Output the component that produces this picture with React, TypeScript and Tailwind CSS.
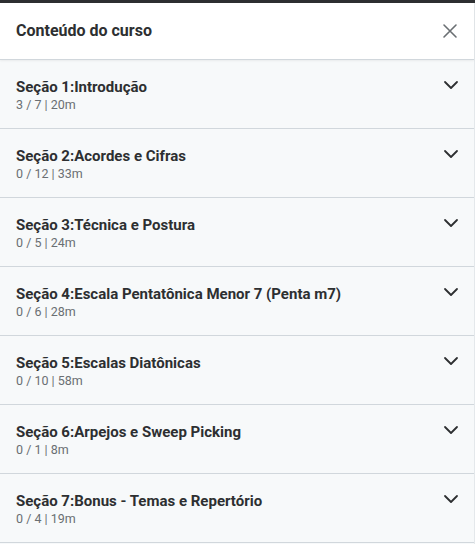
const sections = [
  { title: "Seção 1:Introdução", meta: "3 / 7 | 20m" },
  { title: "Seção 2:Acordes e Cifras", meta: "0 / 12 | 33m" },
  { title: "Seção 3:Técnica e Postura", meta: "0 / 5 | 24m" },
  { title: "Seção 4:Escala Pentatônica Menor 7 (Penta m7)", meta: "0 / 6 | 28m" },
  { title: "Seção 5:Escalas Diatônicas", meta: "0 / 10 | 58m" },
  { title: "Seção 6:Arpejos e Sweep Picking", meta: "0 / 1 | 8m" },
  { title: "Seção 7:Bonus - Temas e Repertório", meta: "0 / 4 | 19m" },
];

const Chevron = () => (
  <svg width="16" height="16" viewBox="0 0 16 16" fill="none" stroke="#2d2f31" strokeWidth="1.8" strokeLinecap="round" strokeLinejoin="round">
    <path d="M2 5l6 6 6-6" />
  </svg>
);

export default function App() {
  return (
    <div
      className="w-[475px] h-[544px] overflow-hidden bg-[#f7f9fa] border-t-[3px] border-[#2d2f31]"
      style={{ fontFamily: "Roboto, 'Liberation Sans', sans-serif" }}
    >
      <div className="border-r border-[#e4e8eb] h-full">
        {/* Header */}
        <div className="h-[57px] bg-white flex items-center justify-between pl-4 pr-[14px] border-b border-[#d1d7dc] shadow-[0_1px_2px_rgba(0,0,0,0.06)]">
          <h2 className="text-[16px] font-bold text-[#2d2f31]">Conteúdo do curso</h2>
          <svg width="20" height="20" viewBox="0 0 20 20" fill="none" stroke="#6a6f73" strokeWidth="1.6" strokeLinecap="round">
            <path d="M4 4l12 12M16 4L4 16" />
          </svg>
        </div>

        {/* Sections */}
        {sections.map((s) => (
          <div key={s.title} className="flex items-start justify-between pl-4 pr-[15px] pt-[17px] pb-[15px] h-[69px] border-b border-[#d1d7dc]">
            <div>
              <div className="text-[15px] leading-[20px] font-bold text-[#2d2f31]">{s.title}</div>
              <div className="text-[12.5px] leading-[16px] text-[#6a6f73]">{s.meta}</div>
            </div>
            <div>
              <Chevron />
            </div>
          </div>
        ))}
      </div>
    </div>
  );
}
